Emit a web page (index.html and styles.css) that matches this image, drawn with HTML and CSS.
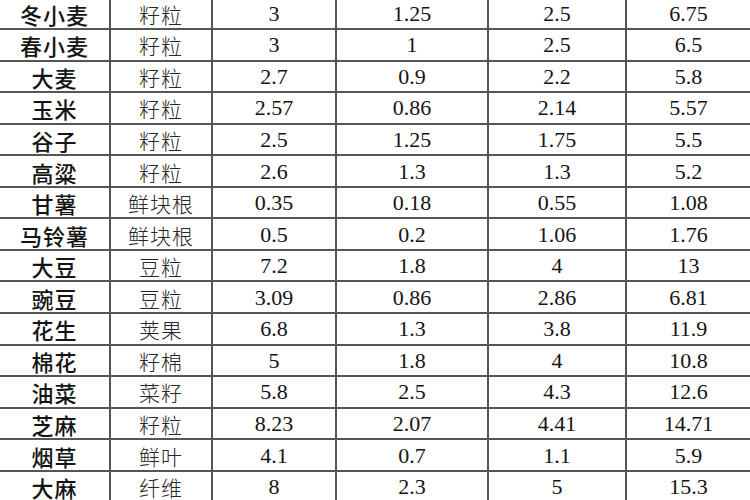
FILE: index.html
```html
<!DOCTYPE html>
<html lang="zh">
<head>
<meta charset="utf-8">
<link rel="stylesheet" href="styles.css">
</head>
<body>
<div class="sheet">
  <div class="grid">
    <div class="c name">冬小麦</div><div class="c part">籽粒</div><div class="c num">3</div><div class="c num">1.25</div><div class="c num">2.5</div><div class="c num last">6.75</div>
    <div class="c name">春小麦</div><div class="c part">籽粒</div><div class="c num">3</div><div class="c num">1</div><div class="c num">2.5</div><div class="c num last">6.5</div>
    <div class="c name">大麦</div><div class="c part">籽粒</div><div class="c num">2.7</div><div class="c num">0.9</div><div class="c num">2.2</div><div class="c num last">5.8</div>
    <div class="c name">玉米</div><div class="c part">籽粒</div><div class="c num">2.57</div><div class="c num">0.86</div><div class="c num">2.14</div><div class="c num last">5.57</div>
    <div class="c name">谷子</div><div class="c part">籽粒</div><div class="c num">2.5</div><div class="c num">1.25</div><div class="c num">1.75</div><div class="c num last">5.5</div>
    <div class="c name">高粱</div><div class="c part">籽粒</div><div class="c num">2.6</div><div class="c num">1.3</div><div class="c num">1.3</div><div class="c num last">5.2</div>
    <div class="c name">甘薯</div><div class="c part">鲜块根</div><div class="c num">0.35</div><div class="c num">0.18</div><div class="c num">0.55</div><div class="c num last">1.08</div>
    <div class="c name">马铃薯</div><div class="c part">鲜块根</div><div class="c num">0.5</div><div class="c num">0.2</div><div class="c num">1.06</div><div class="c num last">1.76</div>
    <div class="c name">大豆</div><div class="c part">豆粒</div><div class="c num">7.2</div><div class="c num">1.8</div><div class="c num">4</div><div class="c num last">13</div>
    <div class="c name">豌豆</div><div class="c part">豆粒</div><div class="c num">3.09</div><div class="c num">0.86</div><div class="c num">2.86</div><div class="c num last">6.81</div>
    <div class="c name">花生</div><div class="c part">荚果</div><div class="c num">6.8</div><div class="c num">1.3</div><div class="c num">3.8</div><div class="c num last">11.9</div>
    <div class="c name">棉花</div><div class="c part">籽棉</div><div class="c num">5</div><div class="c num">1.8</div><div class="c num">4</div><div class="c num last">10.8</div>
    <div class="c name">油菜</div><div class="c part">菜籽</div><div class="c num">5.8</div><div class="c num">2.5</div><div class="c num">4.3</div><div class="c num last">12.6</div>
    <div class="c name">芝麻</div><div class="c part">籽粒</div><div class="c num">8.23</div><div class="c num">2.07</div><div class="c num">4.41</div><div class="c num last">14.71</div>
    <div class="c name">烟草</div><div class="c part">鲜叶</div><div class="c num">4.1</div><div class="c num">0.7</div><div class="c num">1.1</div><div class="c num last">5.9</div>
    <div class="c name">大麻</div><div class="c part">纤维</div><div class="c num">8</div><div class="c num">2.3</div><div class="c num">5</div><div class="c num last">15.3</div>
  </div>
</div>
</body>
</html>
```
FILE: styles.css
```css
html, body {
  margin: 0;
  padding: 0;
  background: #fff;
}
.sheet {
  width: 750px;
  height: 500px;
  overflow: hidden;
  background: #fff;
}
.grid {
  display: grid;
  grid-template-columns: 111px 102px 124px 152px 138px 123px;
  grid-auto-rows: 31.57px;
  margin-top: -1.6px;
}
.c {
  box-sizing: border-box;
  border-right: 2px solid #555;
  border-bottom: 2px solid #555;
  display: flex;
  align-items: center;
  justify-content: center;
  color: #141414;
  padding-top: 1px;
}
.c.last {
  border-right: none;
}
.name {
  font-family: "Noto Sans CJK SC", sans-serif;
  font-size: 22px;
  font-weight: 500;
  letter-spacing: 1px;
}
.part {
  font-family: "Noto Sans CJK SC", sans-serif;
  font-size: 21px;
  font-weight: 300;
  letter-spacing: 1px;
  color: #262626;
}
.num {
  font-family: "Liberation Serif", "Times New Roman", serif;
  font-size: 22px;
}
```
